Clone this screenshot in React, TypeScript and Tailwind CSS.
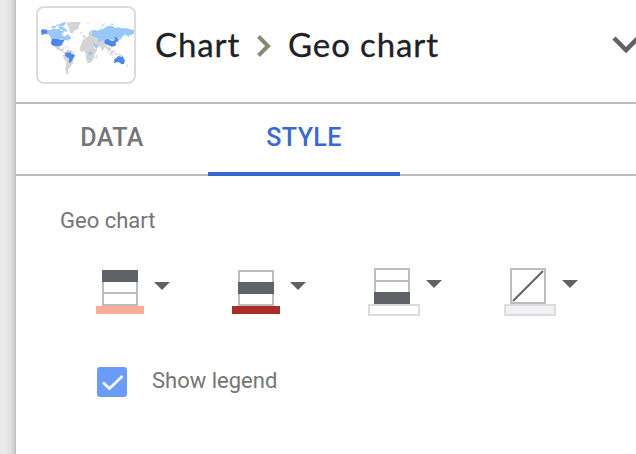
import React from "react";

function WorldMap() {
  return (
    <svg className="h-full w-full" viewBox="24 24 288 222" aria-hidden="true">
      <g fill="#d3d4d5">
        <path d="M108 72l8-5 16-2 20 1-2 6-4 5 1 7-8 5-7 4-5 8-5-1-4-9-1-8-4-6z" />
        <path d="M67 132l16 2 6 5 2 7 6 1 4-3 1 4-4 4 5 4 5 2-2 3-12-7-11-4-7-8-6-6z" />
        <path d="M103 138l8 2 5 3-3 1-9-4z" />
        <path d="M106 155l8-6 10 2 6 5 4 4-16-1-9 3 2 9 10 2 7 11 2 5-6 7-5 7-3 4-2 5 2 8-4 3-5-5-1-10 2-13 1-10-7-9-4-9z" />
        <path d="M155 130l15-3 4 3 11 1 5 3 4 12 9 2-3 6-7 9 1 8-5 7-4 7-6 5-7-1-4-12-1-14-4-9-9 2-5-8 2-10z" />
        <path d="M197 167l4-3 1 4-3 9-3-2z" />
        <path d="M158 119l7-1 3-5 6-4 3-4-2-4 4-7 7-5 7 2-2 8 2 7 2 7 6 4 7-1 8-4 12 2 7 4 16 2-15 4-9 7 4 8 7 3-2 11-5-5-6-7-4 6-3 7-4-6-2-7-9-3-6 1-8-5-9-2-7-2-5-2-8 3-6-1z" />
        <path d="M158 106l3-4 5 7 1 5-6 1zM150 97l6 0 2 3-5 2zM234 141l6 2 4 5-2 5-4-3-1 8 5 4-2 2-5-7zM241 155l7-4 3 4-2 6-6 1zM249 149l4 2 2 5-3 0zM239 163l12 2v2l-12-1zM253 160l5-2 4 4 10 1 6 4-3 2-9-3-6-3-5 3zM259 122l4-2 5-5 1 5-6 6-4 0zM169 69l10-1-5 4zM211 69l4-2v3zM293 193l3 3-5 6-3-1zM109 201l3 2-1 3zM53 142h2v2h-2z" />
      </g>
      <g fill="#98c8f7">
        <path d="M52 90l11 0 7-5 7 3 12-1 5 6 7-2 1 6-6 3 1 6 9 4 5-7 6 3 5 5 1 6-8 2 3 4-8-2-11-2-10-1H64l-3-8-6-6z" />
        <path d="M62 81l8-4 6 1 3 4-9 2zM76 76l6-3 7 2-5 3zM85 80l7-2 8 3 6 5 7 7-6 3-8-6-10-3zM88 73l8-5 16-2-6 4-2 5-6 3-10-1z" />
        <path d="M185 105l2-13 8-2 5 2 9-2 4-4 6 2 8-7 10-4 12 2 5 4 12-1 10 3 12-1 10 3 12 3 12 2-1 4-10 1 1 4-10 5-3-1-4 8-3-6-7-3-8 6-4 7-9 1-13 2-10-2-12 4-6-2-9 2-6 4-4-2 1-7-7-3z" />
        <path d="M215 76l8-5 3 1-7 4-2 6zM242 72l5-2 4 4-7 1zM271 111l3 2-3 8zM190 130l8 3 5 5 2 3-6 5-4-4-5-7zM176 156l11-1-1 11-7 1-5-5zM180 174l4 0-1 5-4-1z" />
      </g>
      <g fill="#4d86ec">
        <path d="M33 91l5-3 14 1 1 13-9-1-6 4-3 0zM65 117l19 0 10 3 10-1-3 6-4 5 0 5-5 2-5 1-2 1-8-1-8-1-6-6z" />
        <path d="M106 160l5-3 7 1 4-2 2 5 6 2 5 2-2 6-4 4-1 6-6 5-2 3-4-4 2-5-1-5-7-4-5-4z" />
        <path d="M223 122l6-4 8 0 5 4 9 0 5-4-2-6 6-1 2 6 5 1-5 7-5 2 1 8-5 4-8 1-6-3-6-2-9-5z" />
        <path d="M253 177l6-3 5-5 7 0 4 3 3-5 3 7 4 9-3 8-8 2-6-6-9 0-7 3z" />
      </g>
    </svg>
  );
}

type Option = "header" | "body" | "footer" | "border";

function TableGlyph({ kind }: { kind: Option }) {
  return (
    <svg className="mx-[6px] block h-9 w-9" viewBox="0 0 36 36" shapeRendering="crispEdges">
      <rect x="1" y="1" width="34" height="34" fill="none" stroke="#bdbdbd" strokeWidth="2" />
      {kind === "header" && <path d="M0 0h36v12H0z" fill="#5f6368" />}
      {kind === "header" && <path d="M0 22h36v2H0z" fill="#bdbdbd" />}
      {kind === "body" && <path d="M0 12h36v12H0z" fill="#5f6368" />}
      {kind === "footer" && <path d="M0 12h36v2H0z" fill="#bdbdbd" />}
      {kind === "footer" && <path d="M0 24h36v12H0z" fill="#5f6368" />}
      {kind === "border" && (
        <path d="M3 33L33 3" stroke="#5f6368" strokeWidth="2" shapeRendering="auto" />
      )}
    </svg>
  );
}

function ColorPicker({ kind, swatch, offset }: { kind: Option; swatch: string; offset: string }) {
  return (
    <button className={`flex w-[136px] shrink-0 items-start ${offset}`} aria-label={`${kind} color`}>
      <span className="w-[52px]">
        <TableGlyph kind={kind} />
        <span className={`block ${swatch}`} />
      </span>
      <svg className="ml-[6px] mt-3 h-2 w-4" viewBox="0 0 16 8">
        <path d="M0 0h16L8 8z" fill="#5f6368" />
      </svg>
    </button>
  );
}

export default function App() {
  return (
    <div className="flex h-[454px] w-[636px] overflow-hidden bg-white font-[Roboto,sans-serif]">
      <div className="w-4 shrink-0 bg-[linear-gradient(to_right,#ececec_0px,#e9e9e9_6px,#dfe1e0_11px,#cfd2d1_14px,#b8bbba_16px)]" />
      <main className="flex min-w-0 flex-1 flex-col">
        <header className="flex h-[104px] shrink-0 border-b-2 border-[#bdbdbd] pl-5 pt-[6px]">
          <div className="h-[78px] w-[100px] shrink-0 rounded-lg border-2 border-[#dadce0] bg-white">
            <WorldMap />
          </div>
          <div className="ml-[18px] flex h-[78px] w-[500px] shrink-0 items-center whitespace-nowrap font-[Lato,sans-serif] text-[33px] leading-10 text-[#202124] [-webkit-text-stroke:0.3px_#202124]">
            <span className="-mt-[2px] ml-px w-[101px] tracking-[0.9px]">Chart</span>
            <svg className="mt-[2px] h-6 w-4 shrink-0" viewBox="0 0 16 24">
              <path d="M2.500 2.500L12 12l-9.500 9.500" fill="none" stroke="#858b72" strokeWidth="4" />
            </svg>
            <span className="-mt-[2px] ml-4 w-[324px] tracking-[0.9px]">Geo chart</span>
            <svg className="h-5 w-7 shrink-0" viewBox="0 0 28 20">
              <path d="M2 3l12 12L26 3" fill="none" stroke="#5f6368" strokeWidth="4.500" />
            </svg>
          </div>
        </header>
        <nav className="flex h-[72px] shrink-0 border-b-2 border-[#bdbdbd] text-[25px] font-medium leading-8 tracking-[0.4px]">
          <button className="flex h-[72px] w-48 justify-center pt-[18px] text-[#757575]">DATA</button>
          <button className="flex h-[72px] w-48 justify-center border-b-4 border-[#3968cf] pt-[18px] text-[#3968cf]">
            STYLE
          </button>
        </nav>
        <section className="px-11 pt-[31px] text-[22px] leading-7 text-[#757575]">
          <h2>Geo chart</h2>
          <div className="-mr-11 mt-[33px] flex h-12 items-start pl-9">
            <ColorPicker kind="header" offset="pt-[2px]" swatch="h-2 w-12 bg-[#f6ae96]" />
            <ColorPicker kind="body" offset="pt-[2px]" swatch="h-2 w-12 bg-[#a92c26]" />
            <ColorPicker kind="footer" offset="pt-0" swatch="h-3 w-[52px] border-2 border-[#dadce0] bg-white" />
            <ColorPicker kind="border" offset="pt-0" swatch="h-3 w-[52px] border-2 border-[#dadce0] bg-[#f1f1f2]" />
          </div>
          <label className="mt-[51px] flex h-[30px] items-center pl-[37px]">
            <span className="h-[30px] w-[30px] rounded-[3px] bg-[#6b9bf8]">
              <svg viewBox="0 0 30 30">
                <path d="M6 15.500l6.500 6L25.500 9" fill="none" stroke="#f5f8ff" strokeWidth="2.800" />
              </svg>
            </span>
            <span className="-mt-[2px] ml-[25px]">Show legend</span>
          </label>
        </section>
      </main>
    </div>
  );
}
